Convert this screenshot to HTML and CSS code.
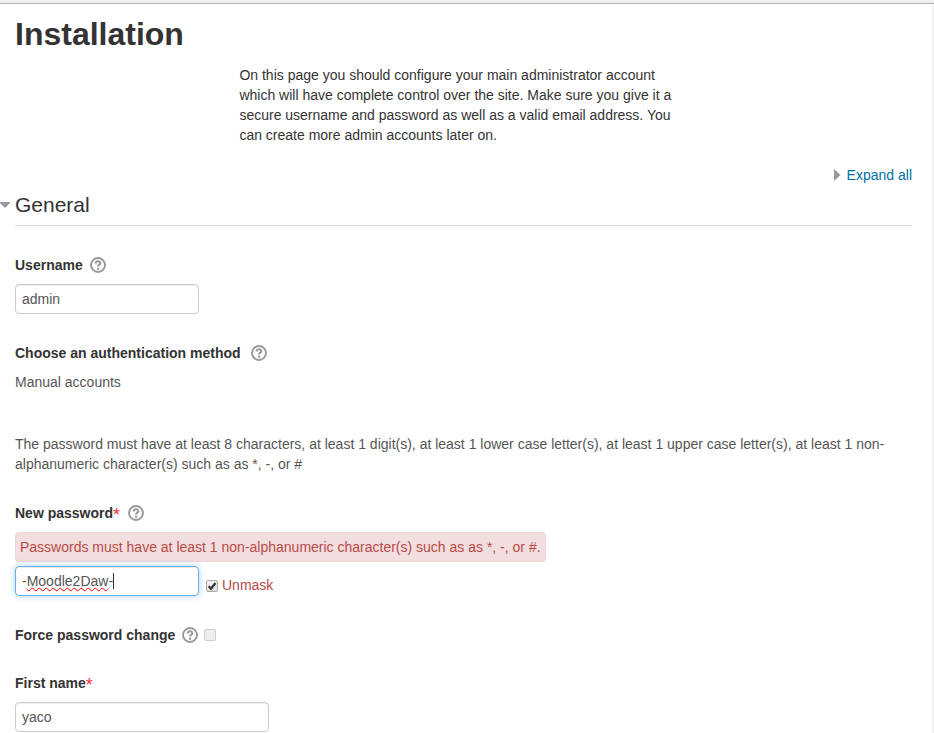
FILE: index.html
```html
<!DOCTYPE html>
<html lang="en">
<head>
<meta charset="utf-8">
<title>Installation</title>
<link rel="stylesheet" href="styles.css">
</head>
<body>
<svg class="defs" aria-hidden="true">
  <symbol id="help" viewBox="0 0 16 16">
    <circle cx="8" cy="8" r="7" fill="none" stroke="#999" stroke-width="1.9"/>
    <path d="M5.7 6.6C5.7 3.6 10.3 3.6 10.3 6.2C10.3 7.7 8.1 7.6 8.1 9.6" fill="none" stroke="#999" stroke-width="2.1"/>
    <rect x="7" y="10.7" width="2.2" height="2.1" fill="#999"/>
  </symbol>
</svg>
<main class="page">
  <h1>Installation</h1>
  <p class="intro">On this page you should configure your main administrator account<br>which will have complete control over the site. Make sure you give it a<br>secure username and password as well as a valid email address. You<br>can create more admin accounts later on.</p>
  <div class="expand"><svg width="7" height="12" viewBox="0 0 7 12"><path d="M0 0L6.5 6L0 12Z" fill="#999"/></svg><a class="expand-link">Expand all</a></div>
  <h2><svg class="caret" width="12" height="6" viewBox="0 0 12 6"><path d="M0 0H12L6 6Z" fill="#999"/></svg><span>General</span></h2>

  <div class="label username"><span>Username</span><svg class="help"><use href="#help"/></svg></div>
  <div class="input"><span>admin</span></div>

  <div class="label auth"><span>Choose an authentication method</span><svg class="help"><use href="#help"/></svg></div>
  <div class="static">Manual accounts</div>

  <p class="policy">The password must have at least 8 characters, at least 1 digit(s), at least 1 lower case letter(s), at least 1 upper case letter(s), at least 1 non-<br>alphanumeric character(s) such as as *, -, or #</p>

  <div class="label password"><span>New password</span><b class="req">*</b><svg class="help"><use href="#help"/></svg></div>
  <div class="error">Passwords must have at least 1 non-alphanumeric character(s) such as as *, -, or #.</div>
  <div class="password-row">
    <div class="input focused"><span>-<span class="misspelt">Moodle2Daw</span>-</span><i class="cursor"></i></div>
    <span class="check"><svg width="12" height="12" viewBox="0 0 12 12"><path d="M2.7 6.2L5 8.7L9.5 3" fill="none" stroke="#333" stroke-width="2.2"/></svg></span>
    <span class="unmask">Unmask</span>
  </div>

  <div class="label force"><span>Force password change</span><svg class="help"><use href="#help"/></svg><span class="check disabled"></span></div>

  <div class="label first"><span>First name</span><b class="req">*</b></div>
  <div class="input wide"><span>yaco</span></div>
</main>
</body>
</html>
```
FILE: styles.css
```css
* { box-sizing: border-box; }
body {
  margin: 0;
  height: 733px;
  overflow: hidden;
  background: #fff;
  color: #333;
  font: 14px/20px "Liberation Sans", Arial, sans-serif;
}
.defs { display: none; }
svg { flex: none; }
.page {
  height: 733px;
  padding: 4px 22px 0 15px;
  background:
    linear-gradient(#f0f0f0 0 3px, #b0b0b0 3px 4px) top / 100% 4px no-repeat,
    linear-gradient(#f1f1f1, #f1f1f1) right / 2px 100% no-repeat;
}
h1 { margin: 10px 0 0; font-size: 32px; line-height: 40px; height: 40px; }
.intro { margin: 11px 0 0 224.4px; }
.expand { display: flex; justify-content: flex-end; align-items: center; height: 20px; margin-top: 20px; gap: 6px; }
.expand-link { color: #0070a8; }
h2 {
  display: flex;
  align-items: center;
  height: 41px;
  margin: 0;
  border-bottom: 1px solid #ddd;
  font-size: 21px;
  font-weight: normal;
  line-height: 40px;
}
.caret { margin-left: -16px; margin-right: 4px; }
.label { display: flex; align-items: center; height: 20px; font-weight: bold; }
.help { width: 16px; height: 16px; margin-left: 7px; }
.username { margin-top: 29px; }
.input {
  display: flex;
  align-items: center;
  width: 184px;
  height: 30px;
  margin-top: 9px;
  padding: 0 6px;
  border: 1px solid #ccc;
  border-radius: 4px;
  box-shadow: inset 0 1px 1px rgba(0, 0, 0, .075);
  color: #555;
}
.wide { width: 254px; }
.auth { margin-top: 29px; }
.auth .help { margin-left: 10px; }
.static { margin-top: 9px; color: #555; }
.policy { margin: 42px 0 0; color: #555; white-space: nowrap; }
.password { margin-top: 29px; }
.req { width: 8px; color: #f33; font-size: 18px; font-weight: normal; line-height: 20px; height: 17px; }
.error {
  width: 531px;
  height: 30px;
  margin-top: 9px;
  padding: 4px;
  border: 1px solid #eed3d7;
  border-radius: 4px;
  background: #f2dede;
  color: #b94a48;
  white-space: nowrap;
}
.password-row { display: flex; align-items: flex-start; margin-top: 4px; }
.focused {
  margin-top: 0;
  border-color: #66afe9;
  box-shadow: inset 0 1px 1px rgba(0, 0, 0, .075), 0 0 6px rgba(82, 168, 236, .5);
}
.misspelt { text-decoration: underline wavy #f00 1px; text-underline-offset: 1px; text-decoration-skip-ink: none; }
.cursor { width: 1px; height: 16px; background: #333; }
.check {
  display: flex;
  width: 12px;
  height: 12px;
  margin: 14px 4px 0 7px;
  border: 1px solid #aaa;
  border-radius: 2px;
  background: linear-gradient(#f1f1f1, #dedede);
}
.check svg { margin: -1px; }
.unmask { margin-top: 9px; color: #b94a48; }
.force { margin-top: 29px; }
.disabled { margin: 0 0 0 6px; border-color: #ccc; background: #eee; }
.first { margin-top: 28px; }
```
